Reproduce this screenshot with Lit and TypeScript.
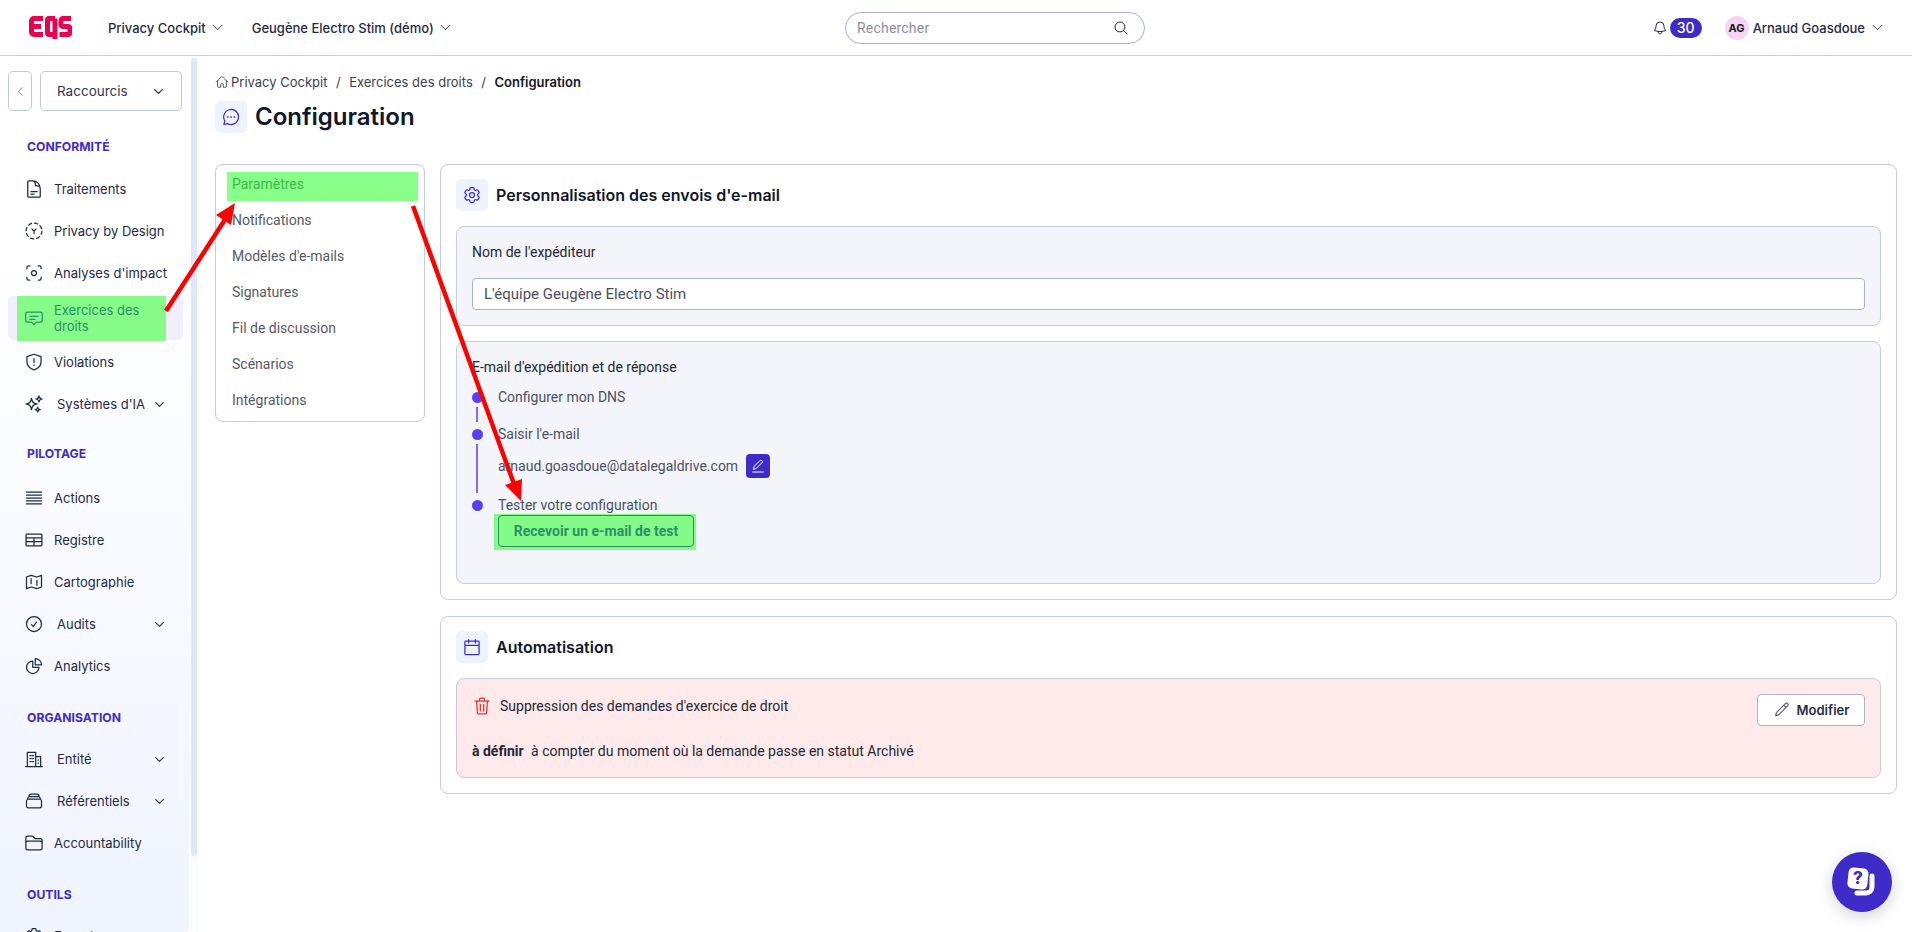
import { LitElement, html, css, svg } from "lit";
import { customElement } from "lit/decorators.js";

const P: Record<string, any> = {
  doc: svg`<path d="M19.5 14.25v-2.625a3.375 3.375 0 0 0-3.375-3.375h-1.5A1.125 1.125 0 0 1 13.5 7.125v-1.5a3.375 3.375 0 0 0-3.375-3.375H8.25m0 12.75h7.5m-7.5 3H12M10.5 2.25H5.625c-.621 0-1.125.504-1.125 1.125v17.25c0 .621.504 1.125 1.125 1.125h12.75c.621 0 1.125-.504 1.125-1.125V11.25a9 9 0 0 0-9-9Z"/>`,
  design: svg`<circle cx="12" cy="12" r="9.5" stroke-dasharray="4 3.5"/><path d="M9.5 9.5 12 12l2.500-2.500M12 12v3"/>`,
  scan: svg`<path d="M7 3.500H5.500a2 2 0 0 0-2 2V7M17 3.500h1.500a2 2 0 0 1 2 2V7M7 20.500H5.500a2 2 0 0 1-2-2V17M17 20.500h1.500a2 2 0 0 0 2-2V17"/><circle cx="12" cy="12" r="3"/>`,
  chat: svg`<path d="M4 5h16a2 2 0 0 1 2 2v8a2 2 0 0 1-2 2h-5l-3 3-3-3H4a2 2 0 0 1-2-2V7a2 2 0 0 1 2-2zM7 10h10M7 13.500h6"/>`,
  shield: svg`<path d="M12 2.700 3.500 5.500v6c0 5 3.500 8.500 8.500 10 5-1.500 8.500-5 8.500-10v-6zM12 8v4.500M12 15.500v.5"/>`,
  sparkles: svg`<path d="M9.813 15.904 9 18.75l-.813-2.846a4.5 4.500 0 0 0-3.090-3.090L2.250 12l2.846-.813a4.500 4.500 0 0 0 3.090-3.090L9 5.250l.813 2.846a4.500 4.500 0 0 0 3.090 3.090L15.750 12l-2.846.813a4.500 4.500 0 0 0-3.090 3.090ZM18.259 8.715 18 9.750l-.259-1.035a3.375 3.375 0 0 0-2.455-2.456L14.250 6l1.036-.259a3.375 3.375 0 0 0 2.455-2.456L18 2.250l.259 1.035a3.375 3.375 0 0 0 2.456 2.456L21.750 6l-1.035.259a3.375 3.375 0 0 0-2.456 2.456ZM16.894 20.567 16.500 21.750l-.394-1.183a2.250 2.250 0 0 0-1.423-1.423L13.500 18.750l1.183-.394a2.250 2.250 0 0 0 1.423-1.423l.394-1.183.394 1.183a2.250 2.250 0 0 0 1.423 1.423l1.183.394-1.183.394a2.250 2.250 0 0 0-1.423 1.423Z"/>`,
  lines: svg`<path d="M3 5h18M3 8.500h18M3 12h18M3 15.500h18M3 19h18"/>`,
  table: svg`<path d="M3.500 5h17a1 1 0 0 1 1 1v12a1 1 0 0 1-1 1h-17a1 1 0 0 1-1-1V6a1 1 0 0 1 1-1zM2.500 9.500h19M2.500 14h19M12 9.500V19"/>`,
  map: svg`<path d="M8.500 4 3 6v14l5.500-2 7 2 5.500-2V4l-5.500 2zM8.500 8v6M15.500 10v6"/>`,
  check: svg`<path d="M9 12.750 11.250 15 15 9.750M21 12a9 9 0 1 1-18 0 9 9 0 0 1 18 0Z"/>`,
  pie: svg`<path d="M10.500 6a7.500 7.500 0 1 0 7.500 7.500h-7.500V6ZM13.500 10.500H21A7.500 7.500 0 0 0 13.500 3v7.500Z"/>`,
  building: svg`<path d="M2 21h20M4 21V4h10v17M14 9h6v12M7 8h1.500M10 8h1.500M7 11.500h1.500M10 11.500h1.500M7 15h1.500M10 15h1.500M17 13v.5M17 16.500v.5"/>`,
  stack: svg`<path d="M6 6.878V6a2.250 2.250 0 0 1 2.250-2.250h7.500A2.250 2.250 0 0 1 18 6v.878m-12 0c.235-.083.487-.128.750-.128h10.500c.263 0 .515.045.750.128m-12 0A2.250 2.250 0 0 0 4.500 9v.878m13.500-3A2.250 2.250 0 0 1 19.500 9v.878m0 0a2.246 2.246 0 0 0-.750-.128H5.250c-.263 0-.515.045-.750.128m15 0A2.250 2.250 0 0 1 21 12v6a2.250 2.250 0 0 1-2.250 2.250H5.250A2.250 2.250 0 0 1 3 18v-6c0-.980.626-1.813 1.500-2.122"/>`,
  folder: svg`<path d="M2.250 12.750V12A2.250 2.250 0 0 1 4.500 9.750h15A2.250 2.250 0 0 1 21.750 12v.750m-8.690-6.440-2.120-2.120a1.500 1.500 0 0 0-1.061-.440H4.500A2.250 2.250 0 0 0 2.250 6v12a2.250 2.250 0 0 0 2.250 2.250h15A2.250 2.250 0 0 0 21.750 18V9a2.250 2.250 0 0 0-2.250-2.250h-5.379a1.500 1.500 0 0 1-1.060-.440Z"/>`,
  gear: svg`<path d="M9.594 3.940c.090-.542.560-.940 1.110-.940h2.593c.550 0 1.020.398 1.110.940l.213 1.281c.063.374.313.686.645.870.074.040.147.083.220.127.325.196.720.257 1.075.124l1.217-.456a1.125 1.125 0 0 1 1.370.490l1.296 2.247a1.125 1.125 0 0 1-.260 1.431l-1.003.827c-.293.241-.438.613-.430.992a7.723 7.723 0 0 1 0 .255c-.008.378.137.750.430.991l1.004.827c.424.350.534.955.260 1.430l-1.298 2.247a1.125 1.125 0 0 1-1.369.491l-1.217-.456c-.355-.133-.750-.072-1.076.124a6.470 6.470 0 0 1-.220.128c-.331.183-.581.495-.644.869l-.213 1.281c-.090.543-.560.940-1.110.940h-2.594c-.550 0-1.019-.398-1.110-.940l-.213-1.281c-.062-.374-.312-.686-.644-.870a6.520 6.520 0 0 1-.220-.127c-.325-.196-.720-.257-1.076-.124l-1.217.456a1.125 1.125 0 0 1-1.369-.490l-1.297-2.247a1.125 1.125 0 0 1 .260-1.431l1.004-.827c.292-.240.437-.613.430-.991a6.932 6.932 0 0 1 0-.255c.007-.380-.138-.751-.430-.992l-1.004-.827a1.125 1.125 0 0 1-.260-1.430l1.297-2.247a1.125 1.125 0 0 1 1.370-.491l1.216.456c.356.133.751.072 1.076-.124.072-.044.146-.086.220-.128.332-.183.582-.495.644-.869l.214-1.280Z"/><path d="M15 12a3 3 0 1 1-6 0 3 3 0 0 1 6 0Z"/>`,
  calendar: svg`<path d="M4.500 5h15a1 1 0 0 1 1 1v14a1 1 0 0 1-1 1h-15a1 1 0 0 1-1-1V6a1 1 0 0 1 1-1zM3.500 10h17M8 3v4M16 3v4"/>`,
  trash: svg`<path d="M3.500 6h17M9 6V4a1.500 1.500 0 0 1 1.500-1.500h3A1.500 1.500 0 0 1 15 4v2M5.500 6l1 14.500a1 1 0 0 0 1 1h9a1 1 0 0 0 1-1l1-14.500M10 10v8M14 10v8"/>`,
  pencil: svg`<path d="M16.500 3.500a2.100 2.100 0 0 1 3 3L7.500 18.500l-4 1 1-4zM14.500 5.500l3 3"/>`,
  pencilLine: svg`<path d="M15 4a2 2 0 0 1 3 3l-9 9-4 1 1-4zM4 21h16"/>`,
  bell: svg`<path d="M14.857 17.082a23.848 23.848 0 0 0 5.454-1.310A8.967 8.967 0 0 1 18 9.750V9A6 6 0 0 0 6 9v.750a8.967 8.967 0 0 1-2.312 6.022c1.733.640 3.560 1.085 5.455 1.310m5.714 0a24.255 24.255 0 0 1-5.714 0m5.714 0a3 3 0 1 1-5.714 0"/>`,
  search: svg`<path d="m21 21-5.197-5.197m0 0A7.500 7.500 0 1 0 5.196 5.196a7.500 7.500 0 0 0 10.607 10.607Z"/>`,
  home: svg`<path d="m2.250 12 8.954-8.955a1.126 1.126 0 0 1 1.591 0L21.750 12M4.500 9.750v10.125c0 .621.504 1.125 1.125 1.125H9.750v-4.875c0-.621.504-1.125 1.125-1.125h2.250c.621 0 1.125.504 1.125 1.125V21h4.125c.621 0 1.125-.504 1.125-1.125V9.750"/>`,
  down: svg`<path d="m5 8.500 7 7 7-7"/>`,
  left: svg`<path d="M15 5l-7 7 7 7"/>`,
  bubble: svg`<path d="M12 3a9 9 0 1 1-4.300 16.900L3.500 21l1.100-4.200A9 9 0 0 1 12 3z"/><path d="M7.800 12h.5M11.800 12h.5M15.800 12h.5" stroke-width="2"/>`,
};
const ic = (n: string, cls = "i") => html`<svg class=${cls} viewBox="0 0 24 24" fill="none" stroke="currentColor" stroke-width="1.5" stroke-linecap="round" stroke-linejoin="round">${P[n]}</svg>`;

type Nav = { s?: string; c?: string; t?: string; i?: string; more?: boolean; on?: boolean };
const NAV: Nav[] = [
  { s: "CONFORMITÉ" },
  { t: "Traitements", i: "doc" }, { t: "Privacy by Design", i: "design" }, { t: "Analyses d'impact", i: "scan" },
  { t: "Exercices des droits", i: "chat", on: true }, { t: "Violations", i: "shield" }, { t: "Systèmes d'IA", i: "sparkles", more: true },
  { s: "PILOTAGE", c: "pil" },
  { t: "Actions", i: "lines" }, { t: "Registre", i: "table" }, { t: "Cartographie", i: "map" }, { t: "Audits", i: "check", more: true }, { t: "Analytics", i: "pie" },
  { s: "ORGANISATION", c: "low" },
  { t: "Entité", i: "building", more: true }, { t: "Référentiels", i: "stack", more: true }, { t: "Accountability", i: "folder" },
  { s: "OUTILS", c: "low" },
  { t: "Exports", i: "gear" },
];
const TABS = ["Paramètres", "Notifications", "Modèles d'e-mails", "Signatures", "Fil de discussion", "Scénarios", "Intégrations"];

@customElement("app-root")
export class AppRoot extends LitElement {
  static styles = css`
    :host { display: flex; flex-direction: column; height: 932px; overflow: hidden; position: relative; background: #fff; font-family: Roboto, sans-serif; font-size: 14px; color: #3c4150; }
    .i { width: 20px; height: 20px; flex: none; }
    header { height: 55px; flex: none; border-bottom: 1px solid #c8cedb; display: flex; align-items: center; padding: 0 27px 0 29px; font: 500 13px Inter, sans-serif; color: #1f2a44; }
    .lft { width: 816px; flex: none; display: flex; align-items: center; }
    .logo { width: 43px; height: 23px; flex: none; margin-right: 36px; }
    .menu { display: flex; align-items: center; gap: 4px; margin-right: 27px; }
    .chev { width: 15px; height: 15px; flex: none; }
    .search { width: 300px; height: 32px; box-sizing: border-box; border: 1px solid #a9b3d0; border-radius: 16px; display: flex; align-items: center; justify-content: space-between; padding: 0 15px 0 11px; font: 400 14px Roboto, sans-serif; color: #8a8f9c; letter-spacing: .2px; }
    .search .i { width: 16px; height: 16px; color: #1f2a44; }
    .right { margin-left: auto; display: flex; align-items: center; }
    .bell { width: 16px; height: 16px; margin-right: 2px; }
    .badge { width: 32px; height: 20px; border-radius: 10px; background: #3f2bc9; color: #fff; font: 500 14px/20px Inter, sans-serif; text-align: center; margin-right: 23px; }
    .av { width: 24px; height: 24px; border-radius: 50%; background: #f9d3f3; color: #111827; font: 700 11px/24px Inter, sans-serif; text-align: center; margin-right: 4px; }
    .right .chev { margin-left: 5px; }

    .body { flex: 1; display: flex; min-height: 0; }
    aside { width: 189px; flex: none; box-sizing: border-box; overflow: hidden; padding: 15px 6px 0 8px; background: linear-gradient(#fff 20%, #f0f4ff 100%); border-bottom-right-radius: 6px; font: 400 13px Inter, sans-serif; color: #1f2a44; }
    .short { display: flex; gap: 8px; height: 40px; margin-bottom: 6px; margin-right: 1px; }
    .back, .sel { box-sizing: border-box; border: 1px solid #c0c8de; border-radius: 5px; background: #fff; display: flex; align-items: center; }
    .back { width: 24px; justify-content: center; color: #565d70; }
    .back .i { width: 13px; height: 13px; }
    .sel { flex: 1; padding: 0 16px; justify-content: space-between; font: 400 13.500px Inter, sans-serif; color: #333a4c; }
    .sel .i { width: 13px; height: 13px; stroke-width: 2.500; }
    .sec { height: 51px; box-sizing: border-box; padding: 21px 0 0 19px; font: 700 12.200px/18px Inter, sans-serif; color: #3f2bc9; }
    .sec.pil { height: 52px; padding-top: 20px; }
    .sec.low { padding-top: 22px; }
    .nav { height: 42px; display: flex; align-items: center; padding-left: 16px; gap: 10px; position: relative; white-space: nowrap; }
    .nav.more { gap: 0; }
    .nav.more span { margin-left: 13px; margin-right: auto; }
    .nav .down { width: 13px; height: 13px; margin-right: 17px; stroke-width: 2.500; color: #3c4150; }
    .nav .i { position: relative; }
    .nav span { position: relative; line-height: 16px; }
    .nav.on { height: 44px; margin: 2px 0 1px; background: #f1effd; border-radius: 6px; color: #2b8f6a; white-space: normal; }
    .nav.on::before { content: ""; position: absolute; left: 9px; width: 149px; top: 0; bottom: -1px; background: #86fb88; }
    .nav.on span { width: 100px; }
    .track { width: 10px; flex: none; background: #fbfcff; padding: 2px 2px 0 2px; box-sizing: border-box; }
    .thumb { height: 798px; background: #dfe8fb; border-radius: 4px; }

    main { flex: 1; min-width: 0; padding: 17px 15px 0 16px; }
    .crumbs { display: flex; align-items: center; height: 18px; font: 400 13px Inter, sans-serif; color: #3c4150; }
    .crumbs .i { width: 14px; height: 14px; margin-right: 2px; }
    .crumbs em { font-style: normal; margin: 0 8.500px; }
    .crumbs b { font: 600 13px Inter, sans-serif; color: #111827; }
    .title { display: flex; align-items: center; gap: 8px; margin: 10px 0 31px; }
    .title h1 { margin: 0; font: 600 24px/32px Inter, sans-serif; color: #0f172a; }
    .tile { width: 32px; height: 32px; border-radius: 5px; background: #eff3fe; color: #3f2bc9; display: flex; align-items: center; justify-content: center; flex: none; }
    .cols { display: flex; gap: 15px; align-items: flex-start; }
    .tabs { width: 210px; flex: none; box-sizing: border-box; border: 1px solid #c5cce0; border-radius: 8px; padding: 1px 0 3px 11px; }
    .tab { height: 36px; display: flex; align-items: center; padding-left: 5px; color: #555a66; position: relative; }
    .tab.on { color: #3fb84a; }
    .tab.on::before { content: ""; position: absolute; left: 0; width: 191px; top: 6px; bottom: 1px; background: #88ff88; }
    .tab span { position: relative; }
    .stack { flex: 1; min-width: 0; display: flex; flex-direction: column; gap: 16px; }
    .card { border: 1px solid #c5cce0; border-radius: 8px; padding: 14px 15px 15px; display: flex; flex-direction: column; gap: 15px; }
    .head { display: flex; align-items: center; gap: 8px; font: 600 16px Inter, sans-serif; color: #0f172a; }
    .sub { border: 1px solid #c5cce0; border-radius: 8px; background: #f4f5fb; padding: 16px 12px 16px 15px; color: #222736; line-height: 18px; }
    .sub.a { height: 100px; box-sizing: border-box; padding-right: 15px; }
    .in { margin-top: 17px; height: 32px; box-sizing: border-box; border: 1px solid #a9b3d0; border-radius: 4px; background: #fff; padding: 0 11px; display: flex; align-items: center; color: #4b5060; font-size: 15px; }
    .sub.b { height: 243px; box-sizing: border-box; }
    .steps { margin-top: 12px; color: #4b5060; }
    .step { display: flex; gap: 16px; }
    .rail { width: 10px; flex: none; padding-top: 4px; display: flex; flex-direction: column; align-items: center; box-sizing: border-box; }
    .dot { width: 11px; height: 11px; border-radius: 50%; background: #5b3df5; flex: none; }
    .track-line { width: 2px; flex: 1; background: #7f6bff; margin: 4px 0 3px; }
    .h36 { height: 37px; }
    .h71 { height: 71px; }
    .mail { display: flex; align-items: center; gap: 8px; margin-top: 11px; }
    .edit { width: 24px; height: 24px; border-radius: 4px; background: #3f2bc9; color: #fff; display: flex; align-items: center; justify-content: center; }
    .edit .i { width: 16px; height: 16px; }
    .ring { background: #84fb88; width: fit-content; margin: 0 0 -3px -4px; padding: 1px 2px 3px 4px; }
    .test { width: 196px; height: 32px; box-sizing: border-box; border: 1px solid #2a9060; border-radius: 4px; color: #2b8f6a; font: 700 14px/30px Roboto, sans-serif; text-align: center; }
    .sub.p { height: 100px; box-sizing: border-box; background: #feeaeb; padding: 15px; display: flex; justify-content: space-between; align-items: flex-start; }
    .pl { display: flex; flex-direction: column; gap: 26px; }
    .pr { display: flex; align-items: center; gap: 8px; margin-top: 2px; }
    .pr .i { width: 20px; height: 20px; color: #ef2b2b; }
    .pb b { font-weight: 700; margin-right: 4px; }
    .mod { width: 108px; height: 32px; box-sizing: border-box; border: 1px solid #a9b3d0; border-radius: 4px; background: #fff; display: flex; align-items: center; justify-content: center; gap: 6px; font: 600 13px Inter, sans-serif; color: #1f2a44; }
    .mod .i { width: 18px; height: 18px; color: #565d70; }
    .fab { position: absolute; left: 1832px; top: 852px; width: 60px; height: 60px; border-radius: 50%; background: #3f2bc9; box-shadow: 0 4px 16px rgba(0,0,0,.18); }
    .fab svg { width: 60px; height: 60px; display: block; }
    .fab text { font: 800 17px Inter, sans-serif; fill: #3f2bc9; }
    .over { position: absolute; left: 0; top: 0; width: 1912px; height: 932px; pointer-events: none; }
  `;

  render() {
    return html`
      <header>
        <div class="lft">
          <svg class="logo" viewBox="0 0 43 23" fill="none" stroke="#e9004f" stroke-width="5" stroke-linejoin="round">
            <path d="M14 2.500H5a2.500 2.500 0 0 0-2.500 2.500v11a2.500 2.500 0 0 0 2.500 2.500H14M2.500 10.500H12"/>
            <path d="M26 2.500H20a1.500 1.500 0 0 0-1.500 1.500v13a1.500 1.500 0 0 0 1.500 1.500h6V2.500M26 18.500v4.500"/>
            <path d="M42 2.500H34a2 2 0 0 0-2 2v4a2 2 0 0 0 2 2h5a2 2 0 0 1 2 2v4a2 2 0 0 1-2 2H30.500"/>
          </svg>
          <div class="menu">Privacy Cockpit ${ic("down", "chev")}</div>
          <div class="menu">Geugène Electro Stim (démo) ${ic("down", "chev")}</div>
        </div>
        <div class="search">Rechercher ${ic("search")}</div>
        <div class="right">
          ${ic("bell", "bell")}<div class="badge">30</div>
          <div class="av">AG</div>Arnaud Goasdoue ${ic("down", "chev")}
        </div>
      </header>
      <div class="body">
        <aside>
          <div class="short">
            <div class="back">${ic("left")}</div>
            <div class="sel">Raccourcis ${ic("down")}</div>
          </div>
          ${NAV.map((n) => n.s
            ? html`<div class="sec ${n.c ?? ""}">${n.s}</div>`
            : html`<div class="nav ${n.more ? "more" : ""} ${n.on ? "on" : ""}">${ic(n.i!)}<span>${n.t}</span>${n.more ? ic("down", "i down") : ""}</div>`)}
        </aside>
        <div class="track"><div class="thumb"></div></div>
        <main>
          <div class="crumbs">${ic("home")}Privacy Cockpit<em>/</em>Exercices des droits<em>/</em><b>Configuration</b></div>
          <div class="title"><div class="tile">${ic("bubble")}</div><h1>Configuration</h1></div>
          <div class="cols">
            <div class="tabs">${TABS.map((t, i) => html`<div class="tab ${i === 0 ? "on" : ""}"><span>${t}</span></div>`)}</div>
            <div class="stack">
              <section class="card">
                <div class="head"><div class="tile">${ic("gear")}</div>Personnalisation des envois d'e-mail</div>
                <div class="sub a">Nom de l'expéditeur<div class="in">L'équipe Geugène Electro Stim</div></div>
                <div class="sub b">E-mail d'expédition et de réponse
                  <div class="steps">
                    <div class="step h36"><div class="rail"><div class="dot"></div><div class="track-line"></div></div><div>Configurer mon DNS</div></div>
                    <div class="step h71"><div class="rail"><div class="dot"></div><div class="track-line"></div></div><div>Saisir l'e-mail
                      <div class="mail">arnaud.goasdoue@datalegaldrive.com<div class="edit">${ic("pencilLine")}</div></div></div></div>
                    <div class="step"><div class="rail"><div class="dot"></div></div><div>Tester votre configuration<div class="ring"><div class="test">Recevoir un e-mail de test</div></div></div></div>
                  </div>
                </div>
              </section>
              <section class="card">
                <div class="head"><div class="tile">${ic("calendar")}</div>Automatisation</div>
                <div class="sub p">
                  <div class="pl">
                    <div class="pr">${ic("trash")}Suppression des demandes d'exercice de droit</div>
                    <div class="pb"><b>à définir</b> à compter du moment où la demande passe en statut Archivé</div>
                  </div>
                  <div class="mod">${ic("pencil")}Modifier</div>
                </div>
              </section>
            </div>
          </div>
        </main>
      </div>
      <div class="fab">
        <svg viewBox="0 0 60 60">
          <path d="M40 24v11a6 6 0 0 1-6 6h-9" fill="none" stroke="#fff" stroke-width="5" stroke-linecap="round"/>
          <rect x="16" y="16" width="20" height="21" rx="5" fill="#fff" transform="rotate(6 26 26)"/>
          <text x="26" y="32" text-anchor="middle">?</text>
        </svg>
      </div>
      <svg class="over" viewBox="0 0 1912 932">
        <path d="M166 311 226 218M413 206 514 484" stroke="#f00" stroke-width="4.500" fill="none"/>
        <polygon points="235,203 216,215 231,225" fill="#f00"/>
        <polygon points="521,501 505,485 522,479" fill="#f00"/>
      </svg>
    `;
  }
}
